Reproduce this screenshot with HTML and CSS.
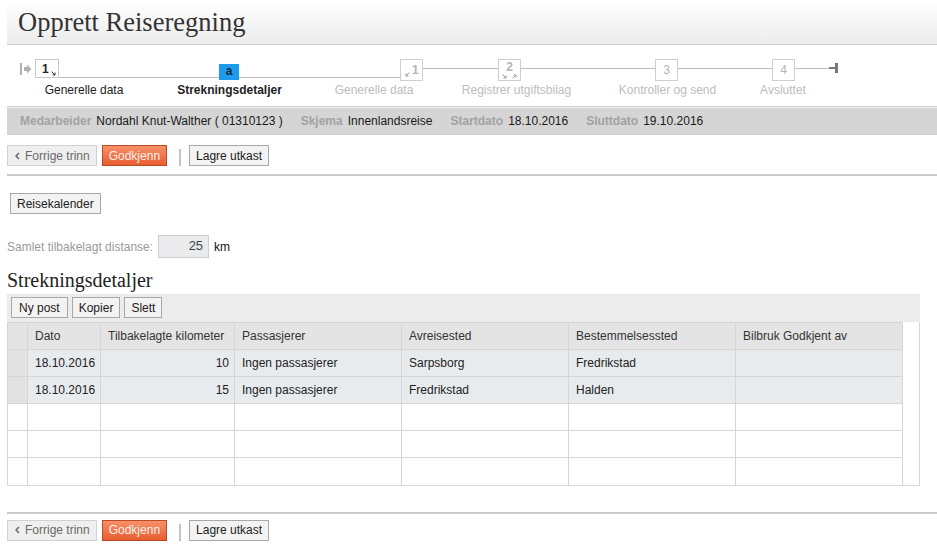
FILE: index.html
```html
<!DOCTYPE html>
<html lang="no">
<head>
<meta charset="utf-8">
<title>Opprett Reiseregning</title>
<link rel="stylesheet" href="styles.css">
</head>
<body>
<div class="page">
  <header class="header"><h1 class="title">Opprett Reiseregning</h1></header>

  <nav class="stepper">
    <div class="track">
      <svg class="start-icon" width="14" height="12" viewBox="0 0 14 12"><rect x="2" y="0" width="2" height="12" fill="#b0b0b0"/><rect x="6" y="4" width="3" height="4" fill="#b0b0b0"/><path d="M9 1.5 L13.5 6 L9 10.5 Z" fill="#b0b0b0"/></svg>
      <div class="box box-done"><span class="num">1</span><svg class="mini mini-done" width="5" height="5" viewBox="0 0 5 5"><path d="M0.5 0.5 L4 4 M4 1.5 V4 H1.5" stroke="#333" stroke-width="1" fill="none"/></svg></div>
      <div class="seg seg-low seg-a"></div>
      <div class="box box-active">a</div>
      <div class="seg seg-low seg-b"></div>
      <div class="box box-future box-f1"><svg class="mini" width="5" height="5" viewBox="0 0 5 5"><path d="M4.5 0.5 L1 4 M1 1.5 V4 H3.5" stroke="#999" stroke-width="1" fill="none"/></svg><span class="num">1</span></div>
      <div class="seg seg-mid seg-c"></div>
      <div class="box box-future box-f2"><span class="num">2</span><span class="minis"><svg width="5" height="5" viewBox="0 0 5 5"><path d="M0.5 0.5 L4 4 M4 1.5 V4 H1.5" stroke="#999" stroke-width="1" fill="none"/></svg><svg width="5" height="5" viewBox="0 0 5 5"><path d="M0.5 4.5 L4 1 M1.5 1 H4 V3.5" stroke="#999" stroke-width="1" fill="none"/></svg></span></div>
      <div class="seg seg-mid seg-d"></div>
      <div class="box box-future box-plain"><span class="num">3</span></div>
      <div class="seg seg-mid seg-e"></div>
      <div class="box box-future box-plain"><span class="num">4</span></div>
      <div class="seg seg-mid seg-f"></div>
      <svg class="end-icon" width="10" height="11" viewBox="0 0 10 11"><rect x="0" y="4" width="7" height="2" fill="#777"/><rect x="6" y="0" width="3" height="10" fill="#777"/></svg>
    </div>
    <div class="labels">
      <span class="label l1">Generelle data</span>
      <span class="label l2 current">Strekningsdetaljer</span>
      <span class="label l3 future">Generelle data</span>
      <span class="label l4 future">Registrer utgiftsbilag</span>
      <span class="label l5 future">Kontroller og send</span>
      <span class="label l6 future">Avsluttet</span>
    </div>
  </nav>

  <div class="infobar">
    <span class="info-label">Medarbeider</span><span class="info-value">Nordahl Knut-Walther ( 01310123 )</span>
    <span class="info-label">Skjema</span><span class="info-value">Innenlandsreise</span>
    <span class="info-label">Startdato</span><span class="info-value">18.10.2016</span>
    <span class="info-label">Sluttdato</span><span class="info-value">19.10.2016</span>
  </div>

  <div class="actions">
    <button class="btn btn-prev"><svg class="chev" width="5" height="8" viewBox="0 0 5 8"><path d="M4 1 L1 4 L4 7" stroke="#666" stroke-width="1.5" fill="none"/></svg>Forrige trinn</button>
    <button class="btn btn-primary">Godkjenn</button>
    <span class="sep"></span>
    <button class="btn btn-std">Lagre utkast</button>
  </div>
  <div class="rule"></div>

  <div class="cal-row"><button class="btn btn-std">Reisekalender</button></div>

  <div class="distance">
    <span class="dist-label">Samlet tilbakelagt distanse:</span>
    <span class="dist-input">25</span>
    <span class="dist-unit">km</span>
  </div>

  <h2 class="section-title">Strekningsdetaljer</h2>
  <div class="toolbar">
    <button class="btn btn-std">Ny post</button>
    <button class="btn btn-std">Kopier</button>
    <button class="btn btn-std">Slett</button>
  </div>
  <div class="grid-wrap">
    <table class="grid">
      <colgroup>
        <col class="c0"><col class="c1"><col class="c2"><col class="c3"><col class="c4"><col class="c5"><col class="c6">
      </colgroup>
      <thead>
        <tr><th></th><th>Dato</th><th>Tilbakelagte kilometer</th><th>Passasjerer</th><th>Avreisested</th><th>Bestemmelsessted</th><th>Bilbruk Godkjent av</th></tr>
      </thead>
      <tbody>
        <tr class="filled"><td class="sel"></td><td>18.10.2016</td><td class="num-cell">10</td><td>Ingen passasjerer</td><td>Sarpsborg</td><td>Fredrikstad</td><td></td></tr>
        <tr class="filled"><td class="sel"></td><td>18.10.2016</td><td class="num-cell">15</td><td>Ingen passasjerer</td><td>Fredrikstad</td><td>Halden</td><td></td></tr>
        <tr><td></td><td></td><td></td><td></td><td></td><td></td><td></td></tr>
        <tr><td></td><td></td><td></td><td></td><td></td><td></td><td></td></tr>
        <tr><td></td><td></td><td></td><td></td><td></td><td></td><td></td></tr>
      </tbody>
    </table>
  </div>

  <div class="rule rule-bottom"></div>
  <div class="actions actions-bottom">
    <button class="btn btn-prev"><svg class="chev" width="5" height="8" viewBox="0 0 5 8"><path d="M4 1 L1 4 L4 7" stroke="#666" stroke-width="1.5" fill="none"/></svg>Forrige trinn</button>
    <button class="btn btn-primary">Godkjenn</button>
    <span class="sep"></span>
    <button class="btn btn-std">Lagre utkast</button>
  </div>
</div>
</body>
</html>
```

FILE: styles.css
```css
* { box-sizing: border-box; }
html, body { margin: 0; padding: 0; background: #fff; }
body {
  font-family: "Liberation Sans", Arial, sans-serif;
  font-size: 12px;
  color: #222;
}
.page { width: 937px; }

/* header */
.header {
  margin-left: 7px;
  height: 45px;
  background: linear-gradient(#ffffff, #ececec);
  border-bottom: 1px solid #d0d0d0;
}
.title {
  margin: 0;
  padding-left: 11px;
  font-family: "Liberation Serif", "Times New Roman", serif;
  font-weight: normal;
  font-size: 26.5px;
  line-height: 44px;
  color: #333;
}

/* stepper */
.stepper { padding-top: 14px; }
.track {
  display: flex;
  align-items: flex-start;
  padding-left: 18px;
  height: 22px;
}
.start-icon { margin-top: 4px; width: 14px; flex: none; }
.box {
  flex: none;
  background: #fff;
  position: relative;
  font-size: 12px;
}
.box-done {
  margin-left: 3px;
  width: 24px;
  height: 19px;
  border: 1px solid #c8c8c8;
  display: flex;
  align-items: flex-start;
  padding: 2px 0 0 6px;
  font-weight: bold;
  color: #222;
}
.box-done .mini-done { margin-top: 9px; margin-left: 2px; }
.seg { flex: none; border-bottom: 1px solid #bdbdbd; }
.seg-low { height: 19px; }
.seg-mid { height: 10px; }
.seg-a { width: 160px; }
.seg-b { width: 161px; }
.seg-c { width: 75px; }
.seg-d { width: 134px; }
.seg-e { width: 94px; }
.seg-f { width: 34px; }
.box-active {
  width: 20px;
  height: 16px;
  margin-top: 5px;
  background: #1e9bea;
  color: #1b2a3a;
  font-weight: bold;
  text-align: center;
  line-height: 15px;
}
.box-future {
  width: 23px;
  height: 22px;
  border: 1px solid #cfcfcf;
  color: #b5b5b5;
  font-weight: bold;
}
.box-f1 {
  display: flex;
  align-items: flex-start;
  padding: 3px 0 0 4px;
}
.box-f1 .mini { margin-top: 9px; }
.box-f1 .num { margin-left: 2px; }
.box-f2 {
  display: flex;
  flex-direction: column;
  align-items: center;
  padding-top: 1px;
  line-height: 12px;
}
.minis { display: flex; gap: 5px; margin-top: 1px; }
.minis svg { display: block; }
.box-plain { text-align: center; line-height: 20px; font-weight: normal; }
.end-icon { flex: none; margin-top: 4px; }

.labels {
  display: flex;
  padding-left: 10px;
  margin-top: 2px;
  line-height: 14px;
  color: #222;
}
.label { text-align: center; flex: none; }
.l1 { width: 148px; }
.l2 { width: 143px; }
.l3 { width: 146px; }
.l4 { width: 139px; }
.l5 { width: 163px; }
.l6 { width: 68px; }
.current { font-weight: bold; }
.future { color: #bdbdbd; }

/* info bar */
.infobar {
  margin-top: 9px;
  margin-left: 7px;
  height: 29px;
  border-top: 1px solid #cacaca;
  border-bottom: 1px solid #cfcfcf;
  box-shadow: inset 0 1px 0 #f4f4f4;
  background: #d5d5d5;
  display: flex;
  align-items: center;
  padding-left: 13px;
}
.info-label { font-weight: bold; color: #a2a2a2; margin-right: 5px; }
.info-value { color: #1a1a1a; margin-right: 18px; }

/* buttons */
.actions {
  display: flex;
  align-items: flex-start;
  padding-left: 7px;
  margin-top: 10px;
}
.btn {
  font-family: "Liberation Sans", Arial, sans-serif;
  font-size: 12px;
  height: 21px;
  padding: 0 6px;
  margin: 0;
  border: 1px solid #a8a8a8;
  background: #f3f3f3;
  color: #222;
  display: inline-flex;
  align-items: center;
  line-height: 1;
  border-radius: 0;
}
.btn-prev {
  background: #efefef;
  border-color: #d2d2d2;
  color: #6a6a6a;
  padding: 0 6px 0 7px;
}
.chev { margin-right: 5px; }
.btn-primary {
  margin-left: 5px;
  background: linear-gradient(#f8906a, #e85d2f);
  border-color: #b94a26;
  color: #fff1ea;
}
.sep {
  width: 2px;
  height: 17px;
  margin: 4px 8px 0 12px;
  background: #c4c4c4;
}
.rule {
  margin-top: 8px;
  margin-left: 7px;
  height: 2px;
  background: #c9c9c9;
}

.cal-row { margin-top: 17px; padding-left: 10px; }

.distance {
  margin-top: 21px;
  padding-left: 7px;
  display: flex;
  align-items: center;
  height: 23px;
}
.dist-label { color: #9a9a9a; }
.dist-input {
  margin-left: 5px;
  width: 51px;
  height: 23px;
  border: 1px solid #cfcfcf;
  background: #e9ebed;
  text-align: right;
  padding-right: 5px;
  line-height: 19px;
  font-size: 13px;
  color: #444;
}
.dist-unit { margin-left: 5px; color: #111; }

.section-title {
  margin: 11px 0 3px 7px;
  font-family: "Liberation Serif", "Times New Roman", serif;
  font-weight: normal;
  font-size: 20px;
  line-height: 22px;
  color: #222;
}

.toolbar {
  margin-left: 7px;
  width: 913px;
  height: 28px;
  background: #ececec;
  display: flex;
  align-items: flex-start;
  gap: 4px;
  padding: 3px 0 0 4px;
}
.toolbar .btn { padding: 0 6px; }
.toolbar .btn:first-child { padding: 0 7px; }

.grid-wrap {
  margin-left: 7px;
  width: 913px;
  border-right: 1px solid #d8d8d8;
  border-bottom: 1px solid #d8d8d8;
}
.grid {
  border-collapse: collapse;
  width: 895px;
  table-layout: fixed;
}
.c0 { width: 20px; }
.c1 { width: 73px; }
.c2 { width: 134px; }
.c3 { width: 167px; }
.c4 { width: 167px; }
.c5 { width: 167px; }
.c6 { width: 167px; }
.grid th, .grid td {
  height: 27px;
  border: 1px solid #d6d6d6;
  padding: 0 0 0 7px;
  text-align: left;
  font-weight: normal;
  white-space: nowrap;
  color: #222;
}
.grid tbody tr:last-child td { border-bottom: none; }
.grid th { background: #e4e4e4; color: #333; }
.grid tr.filled td { background: #e8ebee; }
.grid tr.filled td.sel { background: #e2e2e2; }
.grid td.num-cell { text-align: right; padding-right: 5px; }

.rule-bottom { margin-top: 26px; }
.actions-bottom { margin-top: 6px; }
```
